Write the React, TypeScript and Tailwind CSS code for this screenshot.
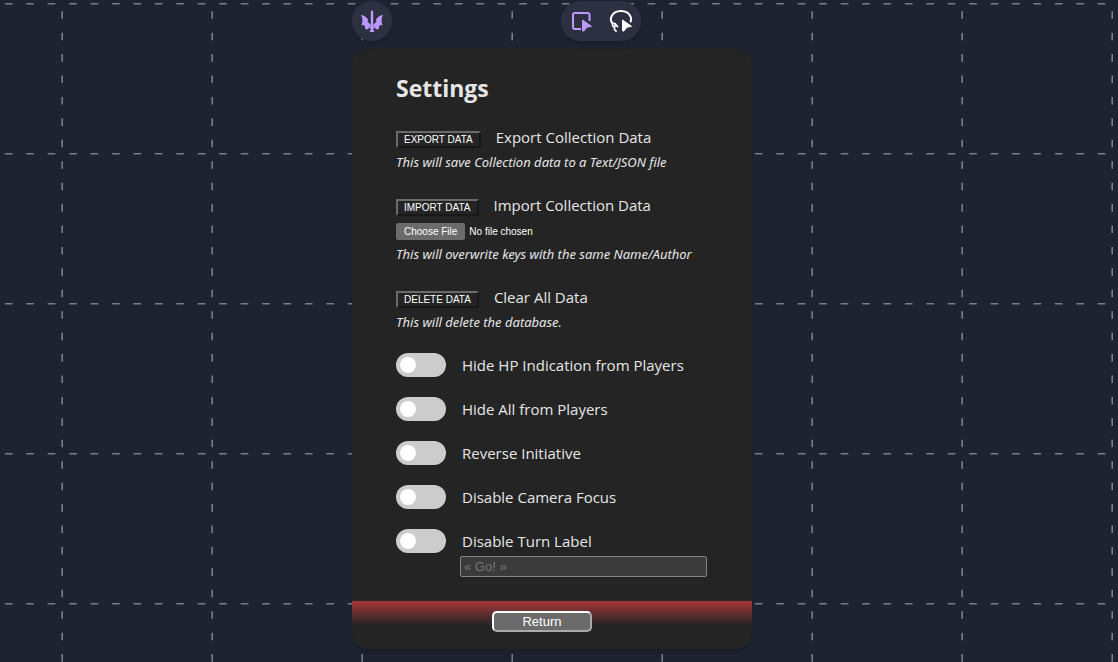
import React from "react";

function GridBackdrop() {
  return (
    <svg className="absolute inset-0 h-full w-full" aria-hidden="true">
      <defs>
        <pattern id="grid" x="61" y="3" width="150" height="150" patternUnits="userSpaceOnUse">
          <path d="M8.200 .8H150" stroke="#7b7d86" strokeWidth="1.600" strokeDasharray="7.6 13.829" />
          <path d="M1.200 8.200V150" stroke="#7b7d86" strokeWidth="1.600" strokeDasharray="7.6 13.829" />
        </pattern>
      </defs>
      <rect width="100%" height="100%" fill="url(#grid)" />
    </svg>
  );
}

function SwordWingsIcon() {
  return (
    <svg width="24" height="24" viewBox="0 0 24 24" fill="#bb99ff" aria-hidden="true">
      <path d="M12 1 13.200 2.500V18h1.600v1.300h-1.500v1.700l.8.600V23H9.900v-1.400l.8-.6v-1.700H9.200V18h1.600V2.500z" />
      <path d="M1 5.800C4 6.500 7 8.300 8 10.500L7.700 13l3 2.500v2.200H8.900l-.2 1.800L7 20.500 5 19.800V17.500L4 16 1.500 16.500 2.500 12.500 2.200 9z" />
      <path d="M23 5.800C20 6.500 17 8.300 16 10.500L16.300 13l-3 2.500v2.200H15.100l.2 1.800L17 20.500 19 19.800V17.500L20 16 22.500 16.500 21.500 12.500 21.800 9z" />
    </svg>
  );
}

function SelectIcon() {
  return (
    <svg width="24" height="24" viewBox="0 0 24 24" aria-hidden="true">
      <path d="M12 20H6a2 2 0 0 1-2-2V6a2 2 0 0 1 2-2h12.500a2 2 0 0 1 2 2v6" fill="none" stroke="#bb99ff" strokeWidth="2" />
      <path d="M13.500 11 22.500 17.300 18 18.200 14.500 22.300 13.500 21.800z" fill="#bb99ff" stroke="#bb99ff" strokeLinejoin="round" />
    </svg>
  );
}

function LassoIcon() {
  return (
    <svg width="24" height="24" viewBox="0 0 24 24" aria-hidden="true">
      <path d="M3.500 14.500C1.800 12.500 1.500 9.800 2.500 7.500 4 4 7.700 2 12 2s8 2 9.500 5.500c.8 2 .7 4-.2 5.800" fill="none" stroke="#fff" strokeWidth="2" />
      <circle cx="5" cy="16" r="1.600" fill="none" stroke="#fff" strokeWidth="1.600" />
      <path d="M5.500 17.500C5 20 6 21.800 7.800 22.500M5.500 14.500 9 18" fill="none" stroke="#fff" strokeWidth="1.800" />
      <path d="M13.500 11 22.500 17.300 18 18.200 14.500 22.300 13.500 21.800z" fill="#fff" stroke="#fff" strokeLinejoin="round" />
    </svg>
  );
}

type DataActionProps = {
  action: string;
  label: string;
  note: string;
  children?: React.ReactNode;
};

function DataAction({ action, label, note, children }: DataActionProps) {
  return (
    <section>
      <div className="flex h-6 items-center gap-[15px]">
        <button
          type="button"
          className="mt-1 h-[17px] shrink-0 border-2 border-t-[#6b6b6b] border-r-[#181818] border-b-[#181818] border-l-[#6b6b6b] px-1.5 font-['Liberation_Sans',sans-serif] text-[10px] leading-[13px] text-white uppercase"
        >
          {action}
        </button>
        <span>{label}</span>
      </div>
      {children}
      <p className="pt-0.5 font-['Noto_Sans',sans-serif] text-[13px] leading-[22px] italic">{note}</p>
    </section>
  );
}

function Toggle({ label }: { label: string }) {
  return (
    <label className="flex h-6 cursor-pointer items-center gap-4">
      <input
        type="checkbox"
        className="h-6 w-[50px] shrink-0 cursor-pointer appearance-none rounded-full bg-[#ccc] p-1 before:block before:size-4 before:rounded-full before:bg-white checked:bg-[#bb99ff] checked:before:ml-auto"
      />
      <span>{label}</span>
    </label>
  );
}

const toggles = [
  "Hide HP Indication from Players",
  "Hide All from Players",
  "Reverse Initiative",
  "Disable Camera Focus",
];

export default function App() {
  return (
    <div className="relative min-h-screen bg-[#1f2230] pr-3.5 font-['Open_Sans','Noto_Sans',sans-serif] text-[15px] leading-6 text-[#e6e6e6]">
      <GridBackdrop />
      <div className="relative mx-auto w-full max-w-[400px] pt-px pb-3">
        <header className="flex items-center justify-between pr-[111px]">
          <button
            type="button"
            aria-label="Initiative tracker"
            className="flex size-10 items-center justify-center rounded-full bg-[#2c3040] shadow-md"
          >
            <SwordWingsIcon />
          </button>
          <div className="flex h-10 rounded-full bg-[#2c3040] shadow-md">
            <button type="button" aria-label="Select" className="flex size-10 items-center justify-center">
              <SelectIcon />
            </button>
            <button type="button" aria-label="Lasso select" className="flex size-10 items-center justify-center">
              <LassoIcon />
            </button>
          </div>
        </header>
        <main className="mt-2 overflow-hidden rounded-2xl bg-[#242424] shadow-md">
          <div className="px-11 pt-[21px] pb-6">
            <h1 className="text-[23px] leading-9 font-bold">Settings</h1>
            <div className="mt-[19px] flex flex-col gap-5">
              <DataAction
                action="Export Data"
                label="Export Collection Data"
                note="This will save Collection data to a Text/JSON file"
              />
              <DataAction
                action="Import Data"
                label="Import Collection Data"
                note="This will overwrite keys with the same Name/Author"
              >
                <input
                  type="file"
                  aria-label="Collection file"
                  className="mt-1.5 block h-[18px] w-full font-['Liberation_Sans',sans-serif] text-[10px] leading-[17px] text-white file:mr-1 file:h-[17px] file:rounded-xs file:bg-[#6b6b6b] file:px-2 file:leading-[17px] file:text-white"
                />
              </DataAction>
              <DataAction
                action="Delete Data"
                label="Clear All Data"
                note="This will delete the database."
              />
              {toggles.map((label) => (
                <Toggle key={label} label={label} />
              ))}
              <div>
                <Toggle label="Disable Turn Label" />
                <input
                  type="text"
                  aria-label="Turn label"
                  placeholder="« Go! »"
                  className="mt-[3px] ml-16 block h-[21px] w-[247px] rounded-xs border border-[#858585] bg-[#3b3b3b] px-[3px] font-['Liberation_Sans',sans-serif] text-[13px] text-white placeholder:text-[#757575]"
                />
              </div>
            </div>
          </div>
          <footer className="flex h-12 items-start justify-center bg-linear-to-b from-[#a83236] to-[#242424] to-50% pt-2.5 pr-5">
            <button
              type="button"
              className="h-[21px] w-[100px] rounded-[5px] border-2 border-t-white border-r-[#aaa] border-b-[#aaa] border-l-white bg-[#6b6b6b] font-['Liberation_Sans',sans-serif] text-[13px] leading-[17px] text-white"
            >
              Return
            </button>
          </footer>
        </main>
      </div>
    </div>
  );
}
